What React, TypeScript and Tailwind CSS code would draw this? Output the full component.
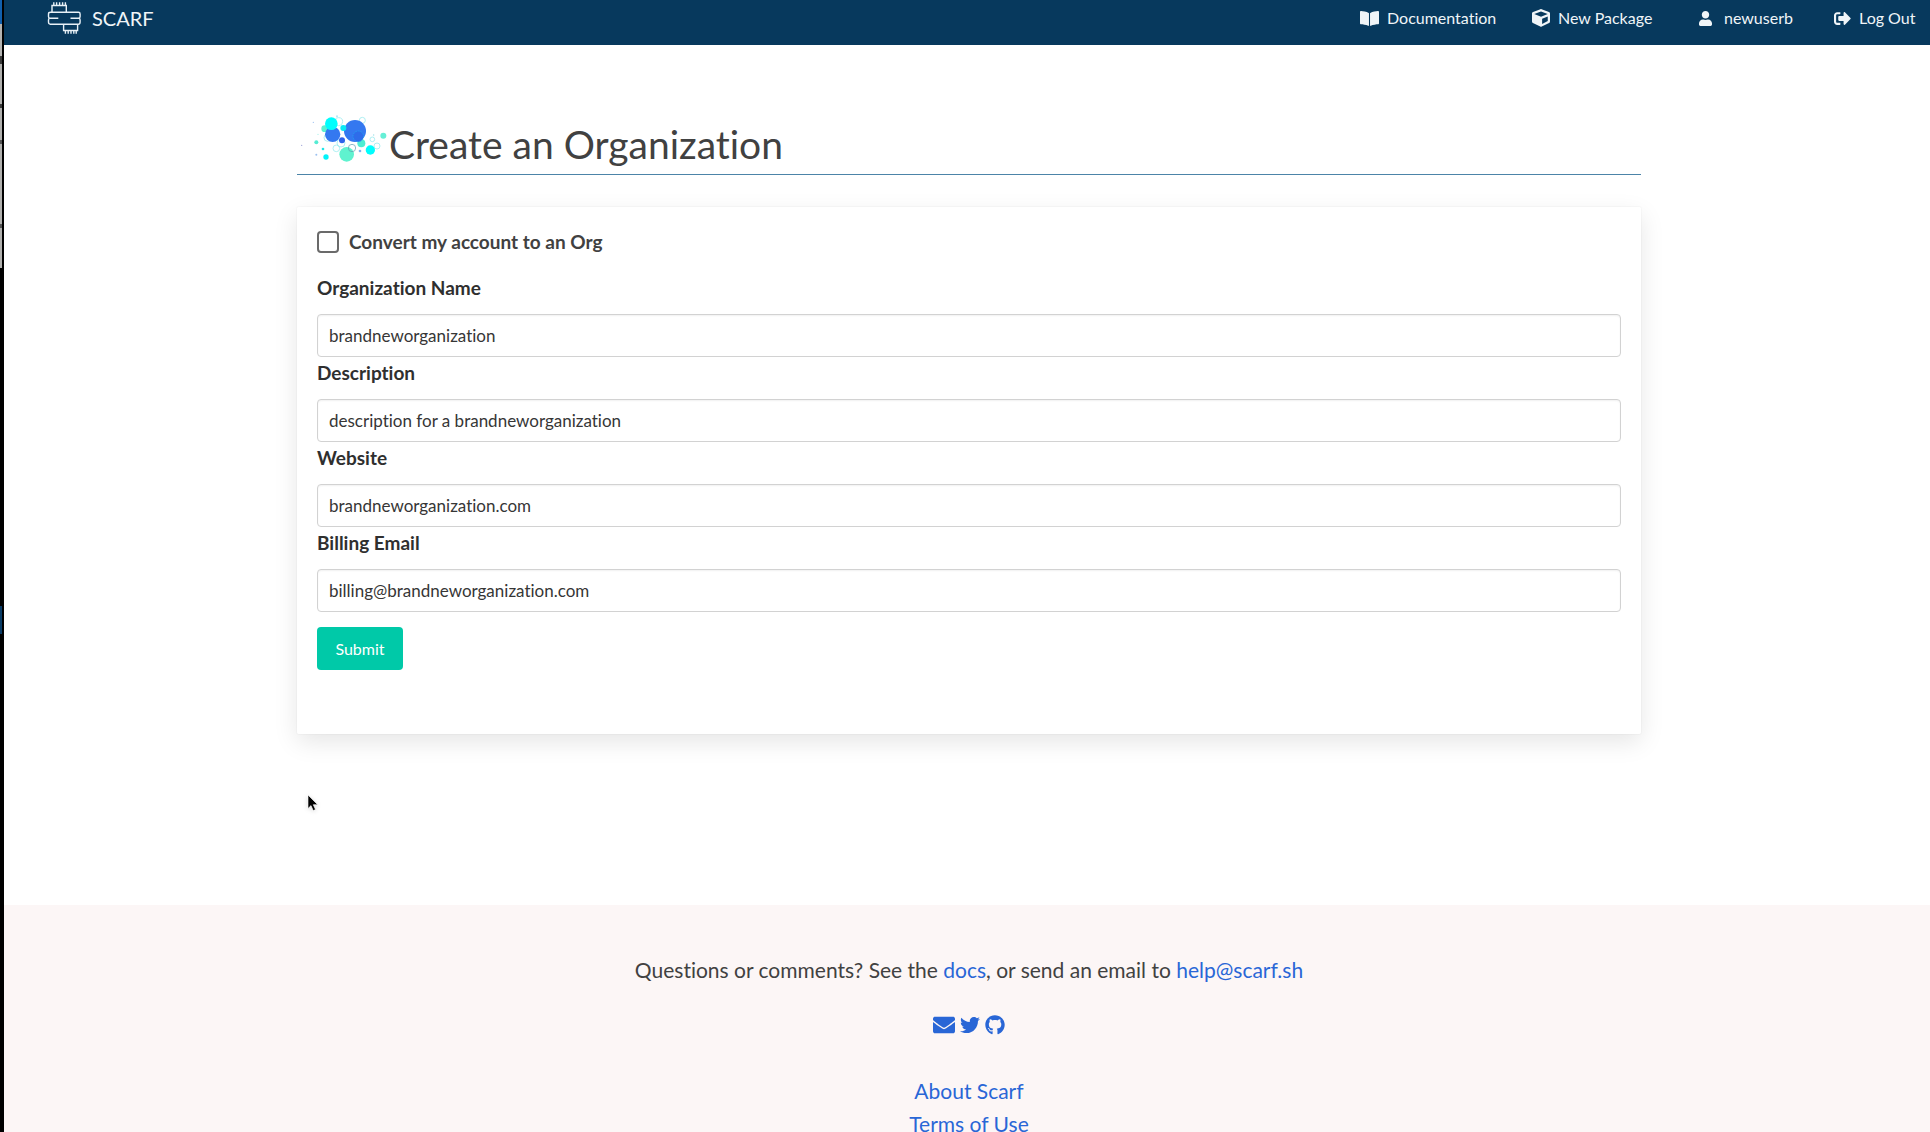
import React from "react";
import {
  FaBookOpen,
  FaCube,
  FaEnvelope,
  FaGithub,
  FaSignOutAlt,
  FaTwitter,
  FaUser,
} from "react-icons/fa";

function ScarfLogo() {
  return (
    <svg viewBox="0 0 36 36" className="h-9 w-9" fill="none" stroke="#e8f1f7" strokeWidth="1.4" aria-hidden="true">
      <path d="M6 12V5.5h14.3V12" />
      <path d="M7.8 5.5V2.3M10.6 5.5V2.3M13.6 5.5V2.3M16.6 5.5V2.3M19.4 5.5V2.3" />
      <path d="M4.5 12.3h28q1.6 0 1.6 1.6v2.6q0 1.6-1.2 1.8 1.2.2 1.2 1.8V22q0 2.2-1.8 2.2h-28Q2.500 24.2 2.500 22v-1.9q0-1.6 1.2-1.8-1.2-.2-1.2-1.8v-2.6q0-1.6 2-1.6z" />
      <path d="M3.500 18.2h8.800M24.500 18.2H33" />
      <path d="M17.600 24.200v6.300h14v-6.300" />
      <path d="M19.400 30.500v3.200M22.200 30.500v3.200M25 30.500v3.200M27.800 30.500v3.200M30.200 30.500v3.200" />
    </svg>
  );
}

function Bubbles() {
  return (
    <svg viewBox="0 9 270 168" className="mb-1 h-14 w-[90px]" aria-hidden="true">
      <g fill="none" stroke="#7fe6ea" strokeWidth="2.5" opacity="0.75">
        <circle cx="119" cy="50" r="12" />
        <circle cx="190" cy="46" r="9" />
        <circle cx="112" cy="130" r="10" />
        <circle cx="126" cy="114" r="12" />
        <circle cx="234" cy="123" r="9" />
        <circle cx="220" cy="103" r="7" />
        <circle cx="86" cy="98" r="11" />
      </g>
      <circle cx="77" cy="71" r="10" fill="#5cf0cf" />
      <circle cx="101" cy="88" r="23" fill="#3478f0" />
      <circle cx="97" cy="56" r="19" fill="#00fdfd" />
      <circle cx="187" cy="115" r="12" fill="#4fedd2" />
      <circle cx="168" cy="78" r="33" fill="#3478f0" />
      <circle cx="133" cy="69" r="9" fill="#08e8f4" />
      <circle cx="129" cy="106" r="9" fill="#2f62ea" />
      <circle cx="178" cy="94" r="16" fill="#2e6cea" stroke="#21aaf0" strokeWidth="2" strokeDasharray="5 3" />
      <circle cx="143" cy="148" r="22" fill="#5ff2cf" />
      <circle cx="159" cy="129" r="11" fill="none" stroke="#5b9cae" strokeWidth="2" />
      <circle cx="214" cy="135" r="14" fill="#00fdfd" />
      <circle cx="253" cy="92" r="9" fill="#66efd6" />
      <circle cx="81" cy="156" r="8" fill="#00f4fa" />
      <circle cx="52" cy="112" r="6" fill="#55ecd3" />
      <circle cx="72" cy="132" r="4" fill="#1fe6e8" />
      <circle cx="183" cy="138" r="4" fill="#7fb2f2" />
      <circle cx="52" cy="149" r="3" fill="#9cc0f0" />
      <circle cx="43" cy="52" r="2" fill="#9cc0f0" />
      <circle cx="8" cy="121" r="2" fill="#9a9fd6" />
      <circle cx="57" cy="88" r="2" fill="#a7f2ea" />
      <circle cx="224" cy="90" r="2" fill="#9adfe6" />
      <circle cx="114" cy="34" r="3" fill="#b4e7fa" />
    </svg>
  );
}

/* Sliver of the desktop that shows beside the browser window. */
function DesktopEdge() {
  return (
    <div className="flex w-1 shrink-0 border-r-2 border-black bg-black" aria-hidden="true">
      <div className="flex w-0.5 flex-col">
        <div className="h-6 bg-[#1160ad]" />
        <div className="h-8 bg-[#b4b4b2]" />
        <div className="h-2 bg-[#3a3a3a]" />
        <div className="h-10 bg-[#b0b0ae]" />
        <div className="h-1 bg-[#3a3a3a]" />
        <div className="h-8 bg-[#b0b0ae]" />
        <div className="h-1 bg-[#555]" />
        <div className="h-20 bg-[#b0b0ae]" />
        <div className="h-1 bg-[#555]" />
        <div className="h-10 bg-[#b0b0ae]" />
        <div className="h-[338px] bg-black" />
        <div className="h-7 bg-[#0a3c66]" />
      </div>
    </div>
  );
}

const fields = [
  { id: "name", label: "Organization Name", value: "brandneworganization" },
  { id: "description", label: "Description", value: "description for a brandneworganization" },
  { id: "website", label: "Website", value: "brandneworganization.com" },
  { id: "email", label: "Billing Email", value: "billing@brandneworganization.com" },
];

export default function App() {
  return (
    <div className="flex h-screen overflow-hidden bg-white font-['Lato',sans-serif] text-[#414141] [font-variant-ligatures:none]">
      <DesktopEdge />
      <div className="relative flex min-w-0 flex-1 flex-col">
        <header className="flex h-[45px] shrink-0 items-start justify-between bg-[#07395d] pl-[42px] text-base text-[#f0f5f8]">
          <a href="#" className="flex h-9 items-center gap-2.5 text-xl">
            <ScarfLogo />
            SCARF
          </a>
          <nav className="flex h-9 items-center">
            <a href="#" className="flex min-w-[172px] items-center gap-2">
              <FaBookOpen className="h-[17px] w-[19px]" />
              Documentation
            </a>
            <a href="#" className="flex min-w-[167px] items-center gap-2">
              <FaCube className="h-[18px] w-[18px]" />
              New Package
            </a>
            <a href="#" className="flex min-w-[135px] items-center gap-3">
              <FaUser className="h-[15px] w-[13px]" />
              newuserb
            </a>
            <a href="#" className="flex min-w-24 items-center gap-2">
              <FaSignOutAlt className="h-[17px] w-[17px]" />
              Log Out
            </a>
          </nav>
        </header>

        <main className="shrink-0 pt-[63px] pb-[171px] pl-1">
          <div className="mx-auto max-w-[1344px]">
            <h1 className="flex items-end border-b border-[#4c84a8] pb-1.5 pl-0.5 text-[39px] leading-[48px]">
              <Bubbles />
              Create an Organization
            </h1>
            <form
              onSubmit={(e) => e.preventDefault()}
              className="mt-8 rounded-xs px-5 pt-5 pb-16 shadow-[0_8px_24px_rgba(10,10,10,0.1),0_0_0_1px_rgba(10,10,10,0.02)]"
            >
              <label className="mb-[17px] flex h-[30px] items-center gap-2.5 text-[19px] font-bold">
                <input
                  type="checkbox"
                  className="size-[22px] appearance-none rounded-sm border-2 border-[#6a6a6a] bg-white checked:bg-[#07395d]"
                />
                Convert my account to an Org
              </label>
              <div className="flex flex-col gap-0.5">
                {fields.map((f) => (
                  <div key={f.id}>
                    <label htmlFor={f.id} className="mb-3 block text-[19px] leading-7 font-bold text-[#2f2f2f]">
                      {f.label}
                    </label>
                    <input
                      id={f.id}
                      type="text"
                      defaultValue={f.value}
                      className="block h-[43px] w-full rounded-sm border border-[#d2d2d2] bg-white px-[11px] text-[17px] text-[#363636] shadow-[inset_0_1px_2px_rgba(10,10,10,0.06)] outline-none"
                    />
                  </div>
                ))}
              </div>
              <button
                type="submit"
                className="mt-[15px] h-[43px] w-[86px] rounded-sm bg-[#00c9a8] text-center text-base text-white"
              >
                Submit
              </button>
            </form>
          </div>
        </main>

        <footer className="flex-1 bg-[#fcf6f6] pt-12 pl-1 text-center text-[21px] leading-[33px]">
          <p>
            Questions or comments? See the{" "}
            <a href="#" className="text-[#2966d6]">docs</a>, or send an email to{" "}
            <a href="#" className="text-[#2966d6]">help@scarf.sh</a>
          </p>
          <div className="mt-7 flex items-center justify-center gap-[5px] text-[#2966d6]">
            <a href="#" aria-label="Email"><FaEnvelope className="size-[22px]" /></a>
            <a href="#" aria-label="Twitter"><FaTwitter className="size-5" /></a>
            <a href="#" aria-label="GitHub"><FaGithub className="size-5" /></a>
          </div>
          <div className="mt-[38px] flex flex-col items-center text-[#2966d6]">
            <a href="#">About Scarf</a>
            <a href="#">Terms of Use</a>
          </div>
        </footer>

        <svg
          viewBox="0 0 12 18"
          className="pointer-events-none absolute top-[794px] left-[303px] h-[18px] w-3 drop-shadow-sm"
          aria-hidden="true"
        >
          <path d="M1 1v13.500l3-2.900 2.200 5 2.300-1-2.200-4.900h4.400z" fill="#000" stroke="#fff" strokeWidth="0.600" />
        </svg>
      </div>
    </div>
  );
}
